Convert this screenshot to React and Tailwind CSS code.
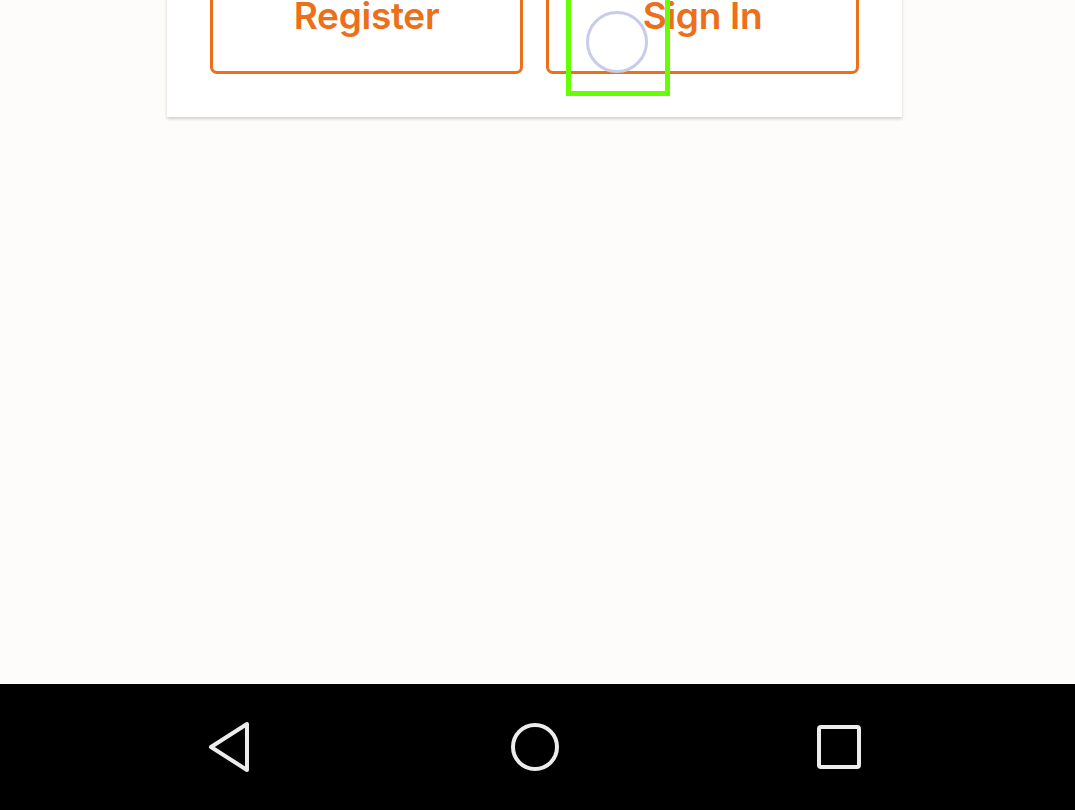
import React from 'react'

const NavBar = () => {
  return (
    <div className='h-[126px] bg-black flex items-center justify-center shrink-0'>
      <div className='w-[656px] -ml-[6px] flex items-center justify-between'>
        <svg width="48" height="52" viewBox="0 0 48 52">
          <path d="M40 3 L40 49 L4 26 Z" fill="none" stroke="#ececec" strokeWidth="4" strokeLinejoin="round" />
        </svg>
        <svg width="52" height="52" viewBox="0 0 52 52">
          <circle cx="26" cy="26" r="22" fill="none" stroke="#ececec" strokeWidth="4" />
        </svg>
        <svg width="48" height="48" viewBox="0 0 48 48">
          <rect x="4" y="4" width="40" height="40" rx="2" fill="none" stroke="#ececec" strokeWidth="4" />
        </svg>
      </div>
    </div>
  )
}

const App = () => {
  return (
    <div className='h-[810px] w-full flex flex-col overflow-hidden bg-[#fdfcfa]' style={{ fontFamily: 'Inter, "Noto Sans", sans-serif' }}>
      <div className='flex-1 overflow-hidden'>
        {/* Card */}
        <div className='w-[735px] ml-[167px] -mt-[70px] bg-white shadow-[0_2px_3px_rgba(0,0,0,0.18)] px-[43px] pt-[27px] pb-[43px]'>
          <div className='grid grid-cols-2 gap-[23px]'>
            <button className='h-[117px] border-[3px] border-[#ec6f1a] rounded-[7px] text-[#ec6f1a] text-[37px] font-semibold tracking-[-0.3px] flex items-center justify-center'>
              Register
            </button>
            <div className='relative'>
              <button className='w-full h-[117px] border-[3px] border-[#ec6f1a] rounded-[7px] text-[#ec6f1a] text-[37px] font-semibold tracking-[-0.3px] flex items-center justify-center'>
                Sign In
              </button>
              {/* touch highlight overlay */}
              <div className='absolute left-[20px] top-[-10px] w-[104px] h-[149px] border-[5px] border-[#66ff00]' />
              <div className='absolute left-[40px] top-[54px] w-[62px] h-[62px] rounded-full border-[3px] border-[#c9cce8]' />
            </div>
          </div>
        </div>
      </div>
      <NavBar />
    </div>
  )
}

export default App
